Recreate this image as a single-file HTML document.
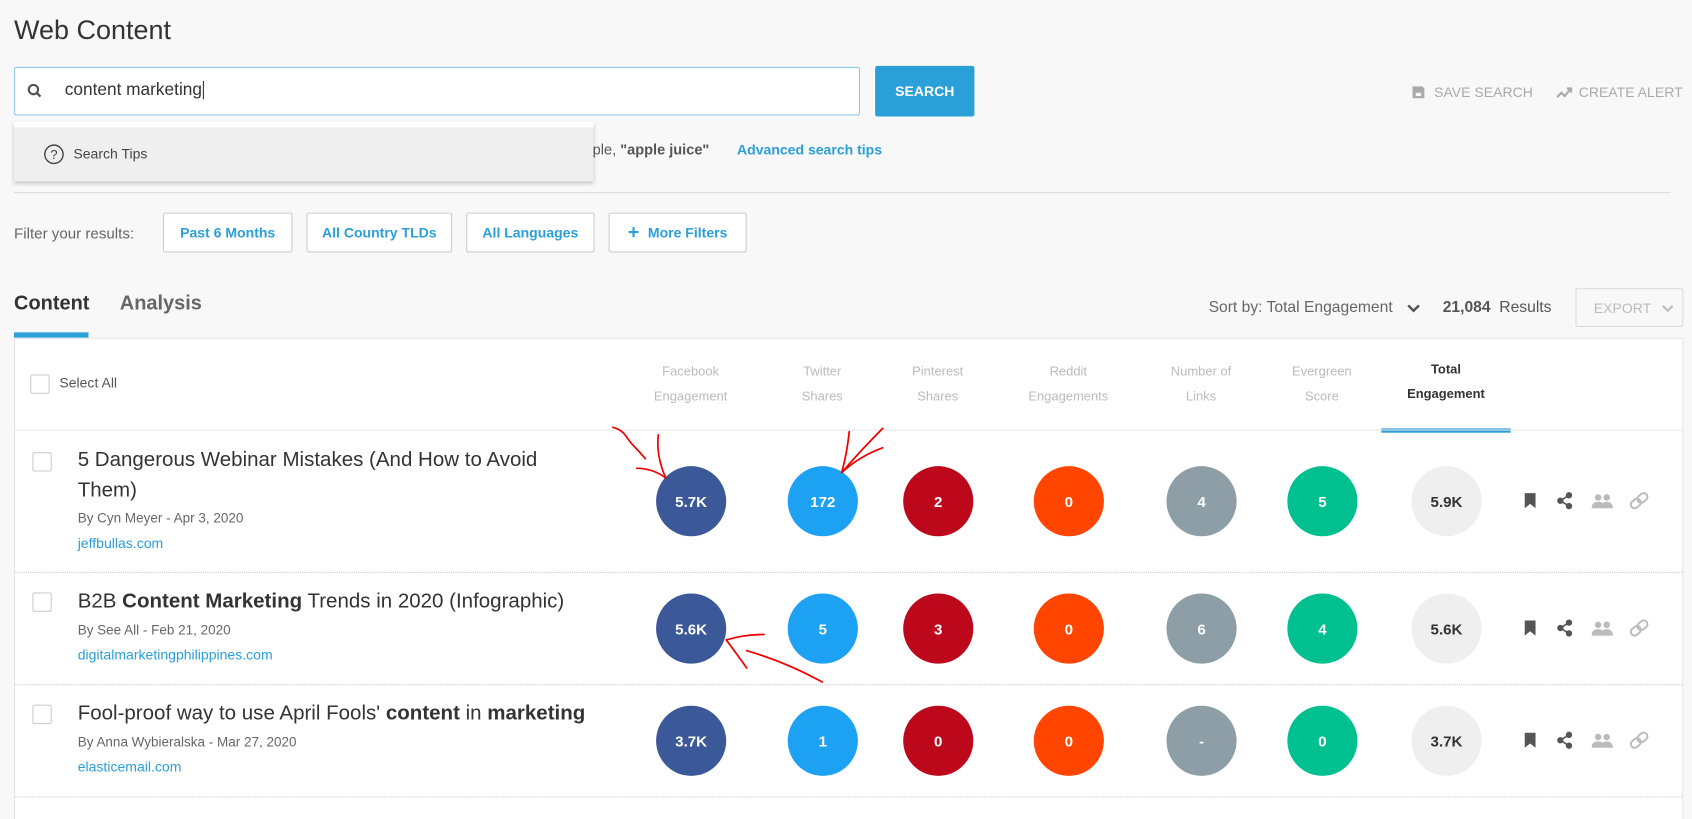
<!DOCTYPE html>
<html><head><meta charset="utf-8"><style>
*{box-sizing:border-box;margin:0;padding:0}
html,body{width:1692px;height:819px;overflow:hidden;background:#f8f8f8}
#w{width:1568px;height:759px;transform:scale(1.07908);transform-origin:0 0;position:relative;font-family:"Liberation Sans",sans-serif;color:#333}
.a{position:absolute;white-space:nowrap}
.btn{position:absolute;background:#fff;border:1px solid #ccc;border-radius:2px;color:#2a9fd8;font-size:13px;font-weight:bold;display:flex;align-items:center;justify-content:center}
.hd{position:absolute;top:333px;width:140px;text-align:center;font-size:12px;line-height:23px;color:#bbb}
.c{position:absolute;width:65px;height:65px;border-radius:50%;color:#fff;font-weight:bold;font-size:14px;display:flex;align-items:center;justify-content:center}
.cb{position:absolute;width:18px;height:18px;border:1px solid #ccc;border-radius:2px;background:#fff}
.t{position:absolute;left:72px;font-size:19px;color:#333;line-height:28px}
.by{position:absolute;left:72px;font-size:12.5px;color:#666}
.dm{position:absolute;left:72px;font-size:13px;color:#2a9fd8}
.sep{position:absolute;left:14px;width:1545px;border-top:1px dotted #ccc}
</style></head><body><div id="w">
<div class="a" style="left:13px;top:14px;font-size:25px;color:#333">Web Content</div>
<div class="a" style="left:13px;top:62px;width:784px;height:45px;background:#fff;border:1px solid #8fcbe8;border-radius:2px"></div>
<svg class="a" style="left:25px;top:77px" width="14" height="14" viewBox="0 0 14 14"><circle cx="6" cy="6" r="4.3" fill="none" stroke="#555" stroke-width="2"/><path d="M9 9l3.5 3.5" stroke="#555" stroke-width="2.2"/></svg>
<div class="a" style="left:60px;top:75px;font-size:16px;color:#333">content marketing<span style="border-left:1px solid #333;margin-left:1px"></span></div>
<div class="btn" style="left:811px;top:61px;width:92px;height:47px;background:#2a9fd8;border:none;color:#fff;font-size:13px">SEARCH</div>
<svg class="a" style="left:1308px;top:79px" width="13" height="13" viewBox="0 0 13 13"><path d="M1 1h9l2 2v9H1z" fill="#aaa"/><rect x="4" y="7" width="5" height="3" fill="#f8f8f8"/></svg>
<div class="a" style="left:1329px;top:78px;font-size:13px;color:#aaa">SAVE SEARCH</div>
<svg class="a" style="left:1442px;top:80px" width="15" height="11" viewBox="0 0 15 11"><path d="M1 10l4-4 3 3 5-6M10 2h4v4" fill="none" stroke="#aaa" stroke-width="2"/></svg>
<div class="a" style="left:1463px;top:78px;font-size:13px;color:#aaa">CREATE ALERT</div>
<div class="a" style="left:538px;top:131px;font-size:13.5px;color:#555">mple, <b>"apple juice"</b></div>
<div class="a" style="left:683px;top:131px;font-size:13px;color:#2a9fd8;font-weight:bold">Advanced search tips</div>
<div class="a" style="left:13px;top:113px;width:537px;height:55px;background:#efefef;border-top:5px solid #fff;box-shadow:0 2px 4px rgba(0,0,0,.2)"></div>
<svg class="a" style="left:40px;top:133px" width="20" height="20" viewBox="0 0 20 20"><circle cx="10" cy="10" r="8.5" fill="none" stroke="#444" stroke-width="1.3"/><text x="10" y="14.5" text-anchor="middle" font-size="12" font-family="Liberation Sans" fill="#444">?</text></svg>
<div class="a" style="left:68px;top:135px;font-size:13px;color:#444">Search Tips</div>
<div class="a" style="left:13px;top:178px;width:1535px;border-top:1px solid #ddd"></div>
<div class="a" style="left:13px;top:208px;font-size:14px;color:#666">Filter your results:</div>
<div class="btn" style="left:151px;top:197px;width:120px;height:37px">Past 6 Months</div>
<div class="btn" style="left:284px;top:197px;width:135px;height:37px">All Country TLDs</div>
<div class="btn" style="left:432px;top:197px;width:119px;height:37px">All Languages</div>
<div class="btn" style="left:564px;top:197px;width:128px;height:37px"><span style="font-size:18px;margin-right:8px;font-weight:bold">+</span>More Filters</div>
<div class="a" style="left:13px;top:270px;font-size:18.5px;font-weight:bold;color:#333">Content</div>
<div class="a" style="left:111px;top:270px;font-size:18.5px;font-weight:bold;color:#666">Analysis</div>
<div class="a" style="left:13px;top:308px;width:69px;height:5px;background:#2a9fd8"></div>
<div class="a" style="left:1120px;top:277px;font-size:14.5px;color:#666">Sort by: Total Engagement</div>
<svg class="a" style="left:1304px;top:281px" width="12" height="9" viewBox="0 0 12 9"><path d="M1 2l5 5 5-5" fill="none" stroke="#555" stroke-width="2.2"/></svg>
<div class="a" style="left:1337px;top:277px;font-size:14.5px;color:#555"><b>21,084</b>&nbsp; Results</div>
<div class="a" style="left:1460px;top:267px;width:100px;height:36px;border:1px solid #ddd;border-radius:2px;font-size:13px;color:#bbb;padding:10px 0 0 16px">EXPORT<svg style="margin-left:10px" width="11" height="8" viewBox="0 0 11 8"><path d="M1 1.5l4.5 4.5 4.5-4.5" fill="none" stroke="#bbb" stroke-width="2"/></svg></div>
<div class="a" style="left:13px;top:313px;width:1547px;height:460px;background:#fff;border:1px solid #e5e5e5"></div>
<div class="cb" style="left:28px;top:347px"></div>
<div class="a" style="left:55px;top:347px;font-size:13px;color:#555">Select All</div>
<div class="hd" style="left:570px">Facebook<br>Engagement</div>
<div class="hd" style="left:692px">Twitter<br>Shares</div>
<div class="hd" style="left:799px">Pinterest<br>Shares</div>
<div class="hd" style="left:920px">Reddit<br>Engagements</div>
<div class="hd" style="left:1043px">Number of<br>Links</div>
<div class="hd" style="left:1155px">Evergreen<br>Score</div>
<div class="hd" style="left:1270px;top:331px;color:#333;font-weight:bold">Total<br>Engagement</div>
<div class="a" style="left:1280px;top:397px;width:120px;height:4px;background:#2a9fd8"></div>
<div class="a" style="left:14px;top:398px;width:1545px;border-top:1px solid #e5e5e5"></div>

<div class="cb" style="left:30px;top:419px"></div>
<div class="t" style="top:413px">5 Dangerous Webinar Mistakes (And How to Avoid<br>Them)</div>
<div class="by" style="top:473px">By Cyn Meyer - Apr 3, 2020</div>
<div class="dm" style="top:496px">jeffbullas.com</div>
<div class="sep" style="top:530px"></div>
<div class="cb" style="left:30px;top:549px"></div>
<div class="t" style="top:544px">B2B <b>Content Marketing</b> Trends in 2020 (Infographic)</div>
<div class="by" style="top:577px">By See All - Feb 21, 2020</div>
<div class="dm" style="top:599px">digitalmarketingphilippines.com</div>
<div class="sep" style="top:634px"></div>
<div class="cb" style="left:30px;top:653px"></div>
<div class="t" style="top:648px">Fool-proof way to use April Fools' <b>content</b> in <b>marketing</b></div>
<div class="by" style="top:681px">By Anna Wybieralska - Mar 27, 2020</div>
<div class="dm" style="top:703px">elasticemail.com</div>
<div class="sep" style="top:738px"></div>

<div class="c" style="left:608px;top:432px;background:#3b5998">5.7K</div>
<div class="c" style="left:730px;top:432px;background:#1da1f2">172</div>
<div class="c" style="left:837px;top:432px;background:#bd081c">2</div>
<div class="c" style="left:958px;top:432px;background:#ff4500">0</div>
<div class="c" style="left:1081px;top:432px;background:#8e9ea7">4</div>
<div class="c" style="left:1193px;top:432px;background:#00c08f">5</div>
<div class="c" style="left:1308px;top:432px;background:#efefef;color:#333">5.9K</div>

<div class="c" style="left:608px;top:550px;background:#3b5998">5.6K</div>
<div class="c" style="left:730px;top:550px;background:#1da1f2">5</div>
<div class="c" style="left:837px;top:550px;background:#bd081c">3</div>
<div class="c" style="left:958px;top:550px;background:#ff4500">0</div>
<div class="c" style="left:1081px;top:550px;background:#8e9ea7">6</div>
<div class="c" style="left:1193px;top:550px;background:#00c08f">4</div>
<div class="c" style="left:1308px;top:550px;background:#efefef;color:#333">5.6K</div>

<div class="c" style="left:608px;top:654px;background:#3b5998">3.7K</div>
<div class="c" style="left:730px;top:654px;background:#1da1f2">1</div>
<div class="c" style="left:837px;top:654px;background:#bd081c">0</div>
<div class="c" style="left:958px;top:654px;background:#ff4500">0</div>
<div class="c" style="left:1081px;top:654px;background:#8e9ea7">-</div>
<div class="c" style="left:1193px;top:654px;background:#00c08f">0</div>
<div class="c" style="left:1308px;top:654px;background:#efefef;color:#333">3.7K</div>

<svg class="a" style="left:0;top:0" width="1568" height="759">
<defs><g id="ic">
<path d="M-5-7h10v14l-5-4-5 4z" fill="#555"/>
<g transform="translate(32,0)" fill="#555" stroke="#555" stroke-width="1.5"><circle cx="4" cy="-5" r="2.2"/><circle cx="-4" cy="0" r="2.2"/><circle cx="4" cy="5" r="2.2"/><path d="M4-5L-4 0 4 5" fill="none"/></g>
<g transform="translate(67,0)" fill="#bbb"><circle cx="-4" cy="-3" r="3"/><circle cx="4" cy="-3" r="3"/><path d="M-10 7q0-6 6-6t6 6zM-1 7q0-6 5-6t6 6z"/></g>
<g transform="translate(101,0) rotate(-40)" fill="none" stroke="#bbb" stroke-width="1.8"><rect x="-9" y="-3.5" width="10" height="7" rx="3.5"/><rect x="-1" y="-3.5" width="10" height="7" rx="3.5"/></g>
</g></defs>
<use href="#ic" x="1418" y="464"/><use href="#ic" x="1418" y="582"/><use href="#ic" x="1418" y="686"/>
<g fill="none" stroke="#e00" stroke-width="1.6" stroke-linecap="round">
<path d="M568 396q8 2 12 8t8 10t10 11"/>
<path d="M610 403q-2 20 7 40"/><path d="M590 434q15 0 27 9"/>
<path d="M818 397q-20 20-38 41"/><path d="M787 400q-2 20-7 38"/><path d="M818 415q-22 8-38 23"/>
<path d="M708 588q-18 0-35 5"/><path d="M692 619q-10-14-19-26"/><path d="M692 603q35 10 70 29"/>
</g>
</svg>
</div></body></html>
